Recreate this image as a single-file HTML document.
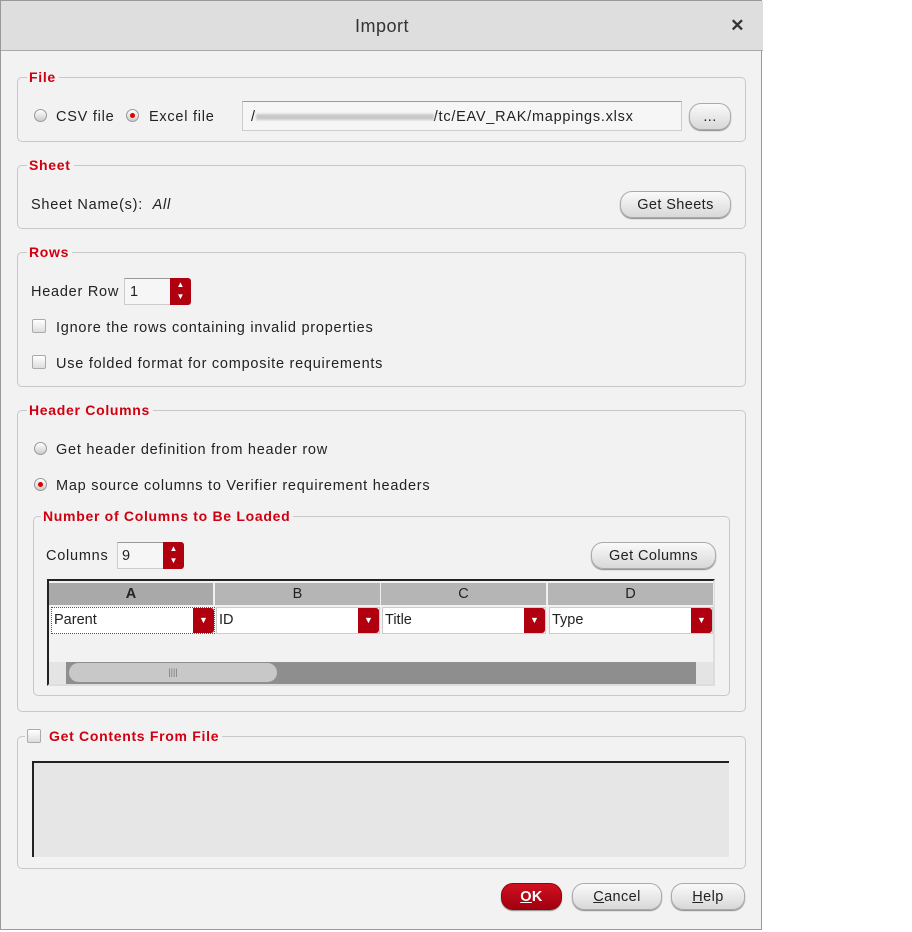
<!DOCTYPE html>
<html><head><style>
*{box-sizing:border-box;margin:0;padding:0}
body{width:912px;height:932px;background:#fff;font-family:"Liberation Sans",sans-serif;font-size:14.5px;color:#222;position:relative;overflow:hidden}
.a{position:absolute}
#dlg{left:0;top:0;width:762px;height:930px;background:#f2f2f2;border:1px solid #999}
#title{left:0;top:0;width:762px;height:50px;background:#dedede;border-bottom:1px solid #aaa;text-align:center;line-height:50px;font-size:18px;color:#333;letter-spacing:0.5px}
.grp{position:absolute;border:1px solid #c8c8c8;border-radius:5px}
.lbl{position:absolute;color:#d00010;font-weight:bold;font-size:14px;background:#f2f2f2;padding:0 3px 0 2px;line-height:16px;letter-spacing:0.7px}
.btn{position:absolute;border:1px solid #aaa;border-radius:12px;background:linear-gradient(#fafafa,#d8d8d8);text-align:center;font-size:14.5px;color:#222;box-shadow:0 1px 1px #888;letter-spacing:0.4px}
.radio{position:absolute;width:13px;height:13px;border-radius:50%;border:1px solid #999;background:linear-gradient(#fff,#ccc)}
.radio.on::after{content:"";position:absolute;left:3px;top:3px;width:5px;height:5px;border-radius:50%;background:#d00}
.cb{position:absolute;width:14px;height:14px;border:1px solid #aaa;border-radius:2px;background:linear-gradient(#fff,#ddd)}
.t{position:absolute;line-height:18px;white-space:nowrap;letter-spacing:0.75px}
.inp{position:absolute;background:#f6f6f6;border:1px solid #ccc;border-top-color:#999}
.spin{position:absolute;background:#b00010;border-radius:0 3px 3px 0;width:21px;color:#fff;font-size:8px;text-align:center;line-height:12px}
.hd{position:absolute;top:2px;height:22px;background:#b5b5b5;border-right:1px solid #eee;text-align:center;line-height:22px;font-size:14.5px}
.dd{position:absolute;top:26px;height:27px;background:#fff;border:1px solid #ccc;line-height:25px;padding-left:2px}
.dd i{position:absolute;right:0;top:0;width:21px;height:25px;background:#b00010;border-radius:0 3px 3px 0;color:#fff;font-style:normal;font-size:9px;text-align:center}
</style></head><body>
<div id="dlg" class="a">
<div id="title" class="a">Import<span class="a" style="right:18px;top:0;font-size:17px;font-weight:bold">✕</span></div>
</div>

<!-- File -->
<div class="grp" style="left:17px;top:77px;width:729px;height:65px"></div>
<div class="lbl" style="left:27px;top:69px">File</div>
<div class="radio" style="left:34px;top:109px"></div><div class="t" style="left:56px;top:108px">CSV file</div>
<div class="radio on" style="left:126px;top:109px"></div><div class="t" style="left:149px;top:108px">Excel file</div>
<div class="inp" style="left:242px;top:101px;width:440px;height:30px"></div>
<div class="t" style="left:251px;top:108px">/<span style="display:inline-block;width:178px;height:6px;background:#c8c8c8;vertical-align:middle;filter:blur(1px)"></span>/tc/EAV_RAK/mappings.xlsx</div>
<div class="btn" style="left:689px;top:103px;width:42px;height:27px;line-height:26px">...</div>

<!-- Sheet -->
<div class="grp" style="left:17px;top:165px;width:729px;height:64px"></div>
<div class="lbl" style="left:27px;top:157px">Sheet</div>
<div class="t" style="left:31px;top:196px">Sheet Name(s): &nbsp;<i>All</i></div>
<div class="btn" style="left:620px;top:191px;width:111px;height:27px;line-height:26px">Get Sheets</div>

<!-- Rows -->
<div class="grp" style="left:17px;top:252px;width:729px;height:135px"></div>
<div class="lbl" style="left:27px;top:244px">Rows</div>
<div class="t" style="left:31px;top:283px">Header Row</div>
<div class="inp" style="left:124px;top:278px;width:47px;height:27px"></div><div class="t" style="left:130px;top:283px">1</div>
<div class="spin" style="left:170px;top:278px;height:27px;padding-top:1px">▲<br>▼</div>
<div class="cb" style="left:32px;top:319px"></div><div class="t" style="left:56px;top:319px">Ignore the rows containing invalid properties</div>
<div class="cb" style="left:32px;top:355px"></div><div class="t" style="left:56px;top:355px">Use folded format for composite requirements</div>

<!-- Header Columns -->
<div class="grp" style="left:17px;top:410px;width:729px;height:302px"></div>
<div class="lbl" style="left:27px;top:402px">Header Columns</div>
<div class="radio" style="left:34px;top:442px"></div><div class="t" style="left:56px;top:441px">Get header definition from header row</div>
<div class="radio on" style="left:34px;top:478px"></div><div class="t" style="left:56px;top:477px">Map source columns to Verifier requirement headers</div>

<div class="grp" style="left:33px;top:516px;width:697px;height:180px"></div>
<div class="lbl" style="left:41px;top:508px">Number of Columns to Be Loaded</div>
<div class="t" style="left:46px;top:547px">Columns</div>
<div class="inp" style="left:117px;top:542px;width:47px;height:27px"></div><div class="t" style="left:122px;top:547px">9</div>
<div class="spin" style="left:163px;top:542px;height:27px;padding-top:1px">▲<br>▼</div>
<div class="btn" style="left:591px;top:542px;width:125px;height:27px;line-height:26px">Get Columns</div>

<div class="a" style="left:47px;top:579px;width:668px;height:107px;background:#f2f2f2;border:2px solid #222;border-right-color:#ddd;border-bottom-color:#ddd">
 <div class="hd" style="left:0;width:165px;background:#a9a9a9;font-weight:bold">A</div>
 <div class="hd" style="left:166px;width:166px">B</div>
 <div class="hd" style="left:332px;width:166px">C</div>
 <div class="hd" style="left:499px;width:166px">D</div>
 <div class="dd" style="left:2px;width:164px;border:1px dotted #555">Parent<i>▼</i></div>
 <div class="dd" style="left:167px;width:164px">ID<i>▼</i></div>
 <div class="dd" style="left:333px;width:164px">Title<i>▼</i></div>
 <div class="dd" style="left:500px;width:164px">Type<i>▼</i></div>
 <div class="a" style="left:0;top:81px;width:664px;height:22px;background:#8e8e8e">
  <div class="a" style="left:0;top:0;width:17px;height:22px;background:#e4e4e4"></div>
  <div class="a" style="left:20px;top:1px;width:208px;height:19px;background:#c8c8c8;border-radius:10px;text-align:center;font-size:9px;line-height:19px;color:#777">||||</div>
  <div class="a" style="right:0;top:0;width:17px;height:22px;background:#e4e4e4"></div>
 </div>
</div>

<!-- Get Contents -->
<div class="grp" style="left:17px;top:736px;width:729px;height:133px"></div>
<div class="lbl" style="left:25px;top:728px;padding-left:24px">Get Contents From File</div>
<div class="cb" style="left:27px;top:729px"></div>
<div class="a" style="left:32px;top:761px;width:697px;height:96px;background:#e6e6e6;border-top:2px solid #222;border-left:2px solid #222"></div>

<div class="btn" style="left:501px;top:883px;width:61px;height:27px;line-height:26px;background:linear-gradient(#d01020,#a00010);color:#fff;font-weight:bold;border-color:#900"><u>O</u>K</div>
<div class="btn" style="left:572px;top:883px;width:90px;height:27px;line-height:26px"><u>C</u>ancel</div>
<div class="btn" style="left:671px;top:883px;width:74px;height:27px;line-height:26px"><u>H</u>elp</div>
</body></html>
